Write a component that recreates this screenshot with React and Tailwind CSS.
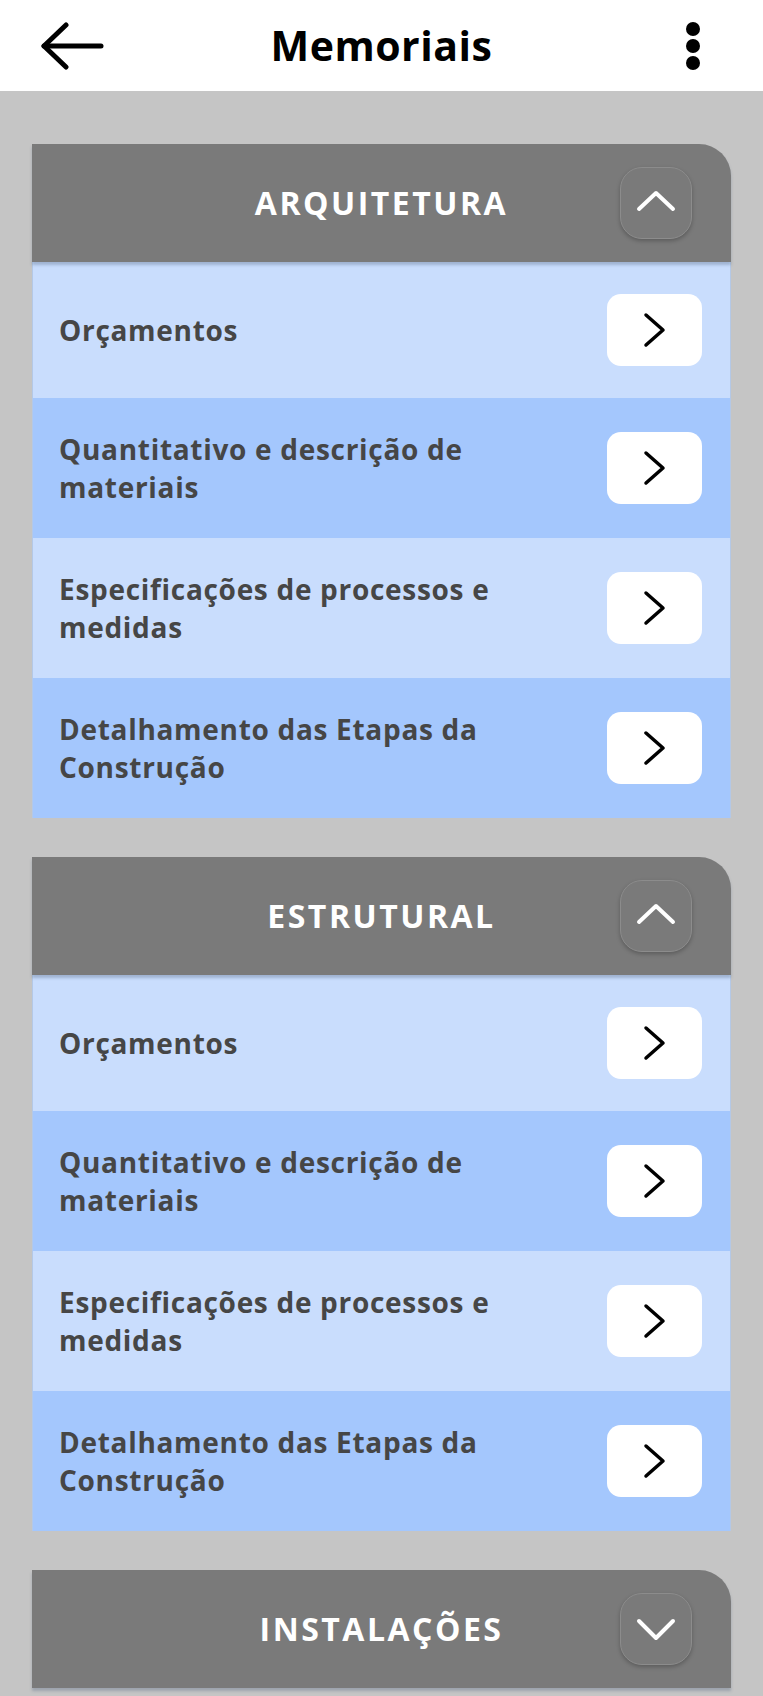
import React from 'react';

const sections = [
  {
    title: 'ARQUITETURA',
    open: true,
    items: [
      'Orçamentos',
      'Quantitativo e descrição de materiais',
      'Especificações de processos e medidas',
      'Detalhamento das Etapas da Construção',
    ],
  },
  {
    title: 'ESTRUTURAL',
    open: true,
    items: [
      'Orçamentos',
      'Quantitativo e descrição de materiais',
      'Especificações de processos e medidas',
      'Detalhamento das Etapas da Construção',
    ],
  },
  { title: 'INSTALAÇÕES', open: false, items: [] },
];

const font = { fontFamily: '"Open Sans", "Noto Sans", sans-serif' };

const App = () => {
  return (
    <div className="min-h-screen bg-[#c5c5c5]" style={font}>
      {/* Top bar */}
      <header className="h-[91px] bg-white flex items-center justify-between px-[40px]">
        <button aria-label="Voltar" className="w-[64px] h-[48px] flex items-center">
          <svg width="64" height="48" viewBox="0 0 64 48" fill="none" stroke="black" strokeWidth="5" strokeLinecap="round" strokeLinejoin="round">
            <path d="M4 24H61" />
            <path d="M26 3L4 24L26 45" />
          </svg>
        </button>
        <h1 className="text-[41px] font-bold text-black leading-none tracking-[0.5px]">Memoriais</h1>
        <button aria-label="Mais opções" className="w-[64px] h-[48px] flex items-center justify-end pr-[22px]">
          <svg width="16" height="48" viewBox="0 0 16 48" fill="black">
            <ellipse cx="8" cy="7" rx="7" ry="7" />
            <ellipse cx="8" cy="24" rx="7" ry="7" />
            <ellipse cx="8" cy="41" rx="7" ry="7" />
          </svg>
        </button>
      </header>

      {/* Sections */}
      <main className="flex flex-col gap-[39px] pt-[53px] px-[32px] pb-[9px]">
        {sections.map((s) => (
          <Section key={s.title} {...s} />
        ))}
      </main>
    </div>
  );
};

const Section = ({ title, open, items }) => (
  <section className="flex flex-col">
    <div className="relative z-10 h-[118px] bg-[#7a7a7a] rounded-tr-[32px] flex items-center justify-center shadow-[0_3px_3px_rgba(80,100,130,0.35)]">
      <h2 className="text-[32px] font-bold text-white tracking-[2.5px]">{title}</h2>
      <button
        aria-label={open ? 'Recolher' : 'Expandir'}
        className="absolute right-[39px] top-[23px] w-[72px] h-[72px] rounded-[22px] border border-[#8c8c8c] bg-[#7a7a7a] shadow-[0_2px_4px_rgba(0,0,0,0.25)] flex items-center justify-center"
      >
        <svg width="40" height="26" viewBox="0 0 40 26" fill="none" stroke="white" strokeWidth="4" strokeLinecap="round" strokeLinejoin="round">
          {open ? <path d="M3 19L20 3L37 19" /> : <path d="M3 5L20 22L37 5" />}
        </svg>
      </button>
    </div>
    {open &&
      items.map((item, i) => (
        <div
          key={item}
          className={`flex items-center justify-between gap-[24px] pl-[26px] pr-[28px] py-[32px] border-x border-[#b4c8e6] ${
            i % 2 === 0 ? 'bg-[#c9ddfd]' : 'bg-[#a4c7fd]'
          }`}
        >
          <span className="max-w-[530px] text-[28px] leading-[38px] font-bold tracking-[0.7px] text-[#464646]">{item}</span>
          <button aria-label="Abrir" className="shrink-0 w-[95px] h-[72px] rounded-[14px] bg-white flex items-center justify-center">
            <svg width="24" height="36" viewBox="0 0 24 36" fill="none" stroke="black" strokeWidth="3.5" strokeLinecap="round" strokeLinejoin="round">
              <path d="M3 3L20 18L3 33" />
            </svg>
          </button>
        </div>
      ))}
  </section>
);

export default App;
